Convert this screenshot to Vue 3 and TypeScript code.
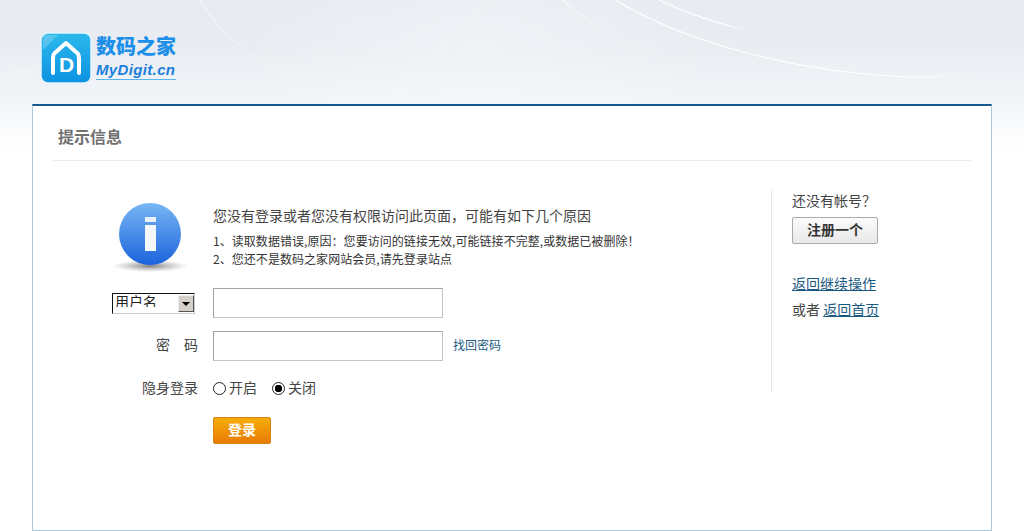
<script setup lang="ts">
const reasons: string[] = [
  '1、读取数据错误,原因：您要访问的链接无效,可能链接不完整,或数据已被删除！',
  '2、您还不是数码之家网站会员,请先登录站点',
]
</script>

<template>
  <div class="page">
    <svg class="swoosh" width="1024" height="104" viewBox="0 0 1024 104" fill="none" aria-hidden="true">
      <defs>
        <linearGradient id="fadeDown" x1="0" y1="0" x2="0" y2="1">
          <stop offset="0" stop-color="#fff" stop-opacity=".45" />
          <stop offset="1" stop-color="#fff" stop-opacity="0" />
        </linearGradient>
        <linearGradient id="fadeRight" x1="0" y1="0" x2="1" y2="0">
          <stop offset="0" stop-color="#fff" stop-opacity=".95" />
          <stop offset=".8" stop-color="#fff" stop-opacity=".95" />
          <stop offset="1" stop-color="#fff" stop-opacity="0" />
        </linearGradient>
      </defs>
      <path d="M200 0C222 38 262 72 345 92" stroke="url(#fadeDown)" stroke-width="1.5" />
      <path d="M493 0C450 30 430 75 384 104" stroke="#fff" stroke-opacity=".28" stroke-width="1.5" />
      <path d="M563 0C590 25 620 40 655 60" stroke="url(#fadeDown)" stroke-width="1.5" />
      <path d="M615 0C690 45 800 72 905 77C935 78 955 76 975 72" stroke="url(#fadeRight)" stroke-width="1.2" />
      <path d="M659 0C690 15 715 22 745 30" stroke="url(#fadeRight)" stroke-width="1.2" />
      <path d="M0 76C12 74 22 72 34 72" stroke="#fff" stroke-opacity=".18" stroke-width="4" />
    </svg>

    <header class="top">
      <a class="logo" href="#">
        <svg class="logo-mark" width="52" height="52" viewBox="0 0 52 52" aria-hidden="true">
          <defs>
            <linearGradient id="logoFill" x1="0" y1="0" x2="0" y2="1">
              <stop offset="0" stop-color="#2bb9ec" />
              <stop offset="1" stop-color="#0e92e2" />
            </linearGradient>
          </defs>
          <rect x="1" y="1" width="50" height="50" rx="7" fill="url(#logoFill)" stroke="#e4f4fb" stroke-width="1.5" />
          <path d="M3 3H18L3 18Z" fill="#fff" fill-opacity=".22" />
          <path d="M13 41V26C13 23 14 21 16 20L26 11L36 20C38 21 39 23 39 26V41" fill="none" stroke="#fff" stroke-width="4" stroke-linejoin="round" stroke-linecap="round" />
          <text x="19" y="40" class="logo-d">D</text>
        </svg>
        <span class="logo-text">
          <span class="logo-cn">数码之家</span>
          <span class="logo-en">MyDigit.cn</span>
        </span>
      </a>
    </header>

    <main class="card">
      <h1 class="card-title">提示信息</h1>
      <div class="card-body">
        <form class="login" @submit.prevent>
          <svg class="info" width="80" height="72" viewBox="0 0 80 72" aria-hidden="true">
            <defs>
              <linearGradient id="infoFill" x1="0" y1="0" x2="0" y2="1">
                <stop offset="0" stop-color="#78b6f4" />
                <stop offset="1" stop-color="#1b63dc" />
              </linearGradient>
              <radialGradient id="infoShade">
                <stop offset="0" stop-color="#555" stop-opacity=".75" />
                <stop offset="1" stop-color="#888" stop-opacity="0" />
              </radialGradient>
            </defs>
            <ellipse cx="40" cy="63" rx="38" ry="6" fill="url(#infoShade)" />
            <circle cx="40" cy="31" r="31" fill="url(#infoFill)" />
            <rect x="35" y="14" width="11" height="5" fill="#eaf1fb" />
            <rect x="35" y="22" width="11" height="26" fill="#f4f7fc" />
          </svg>
          <div class="notice">
            <p class="notice-title">您没有登录或者您没有权限访问此页面，可能有如下几个原因</p>
            <p v-for="line in reasons" :key="line" class="notice-line">{{ line }}</p>
          </div>

          <div class="select-wrap">
            <select class="account-type">
              <option>用户名</option>
              <option>Email</option>
            </select>
            <span class="select-arrow"></span>
          </div>
          <input class="text-input" type="text" />

          <label class="field-label">密　码</label>
          <div class="field-line">
            <input class="text-input" type="password" />
            <a class="forgot" href="#">找回密码</a>
          </div>

          <span class="field-label">隐身登录</span>
          <div class="radios">
            <label class="radio"><input type="radio" name="hidden" />开启</label>
            <label class="radio"><input type="radio" name="hidden" checked />关闭</label>
          </div>

          <button class="submit" type="submit">登录</button>
        </form>

        <aside class="side">
          <p class="side-q">还没有帐号？</p>
          <button class="register" type="button">注册一个</button>
          <p class="side-back"><a href="#">返回继续操作</a></p>
          <p class="side-home">或者 <a href="#">返回首页</a></p>
        </aside>
      </div>
    </main>
  </div>
</template>

<style>
html, body { margin: 0; overflow: hidden; background: #fff; }
</style>

<style scoped>
.page {
  position: relative;
  height: 531px;
  overflow: hidden;
  font-family: "Noto Sans CJK SC", "Liberation Sans", sans-serif;
  color: #444;
  background:
    radial-gradient(ellipse 240px 110px at 480px 50px, rgba(255, 255, 255, .3), rgba(255, 255, 255, 0)),
    linear-gradient(#e7ebf1 0, #e9edf2 50px, #eff2f6 80px, #f3f6f8 104px, #fafbfc 130px, #fff 150px);
}
.swoosh { position: absolute; left: 0; top: 0; }
.top { position: relative; height: 104px; padding: 32px 0 0 40px; box-sizing: border-box; }
.logo { display: flex; gap: 3px; text-decoration: none; }
.logo-mark { flex: none; }
.logo-d { font: 700 21px "Liberation Sans", sans-serif; fill: #fff; }
.logo-text { display: flex; flex-direction: column; padding: 1px 0 0 1px; }
.logo-cn { font-size: 20px; line-height: 25px; font-weight: 900; color: #1c8fe8; white-space: nowrap; }
.logo-en {
  margin-top: 2px;
  font: italic 700 15px/19px "Liberation Sans", sans-serif;
  color: #1c7fdc;
  border-bottom: 1px solid #56b4ee;
  white-space: nowrap;
  letter-spacing: .35px;
}
.card {
  position: relative;
  height: 427px;
  box-sizing: border-box;
  margin: 0 32px;
  padding: 0 20px;
  background: #fff;
  border: 1px solid #a9c9dc;
  border-top: 2px solid #15598c;
}
.card-title {
  margin: 0;
  height: 54px;
  padding-left: 5px;
  border-bottom: 1px solid #e8ebee;
  font-size: 16px;
  line-height: 60px;
  font-weight: 700;
  color: #707070;
}
.card-body { display: flex; padding-top: 29px; }
.login {
  display: grid;
  grid-template-columns: 145px 1fr;
  grid-template-rows: 72px 30px 30px 30px 27px;
  column-gap: 15px;
  row-gap: 13px;
  align-items: center;
  width: 718px;
  height: 201px;
  padding-top: 13px;
  box-sizing: border-box;
  align-content: start;
}
.info { justify-self: end; margin-right: 8px; align-self: start; }
.notice { align-self: start; }
.notice p { margin: 0; white-space: nowrap; }
.notice-title { font-size: 14px; line-height: 24px; color: #444; margin-bottom: 5px !important; }
.notice-line { font-size: 12px; line-height: 18px; color: #333; letter-spacing: .05px; }
.select-wrap { position: relative; justify-self: end; margin-right: 3px; width: 83px; height: 21px; }
.account-type {
  appearance: none;
  display: block;
  width: 83px;
  height: 21px;
  box-sizing: border-box;
  padding: 0 0 6px 2px;
  border: 1px solid;
  border-color: #111 #ccc #ccc #111;
  border-radius: 0;
  background: #fff;
  font: 14px/14px "Noto Sans CJK SC", sans-serif;
  color: #222;
}
.select-arrow {
  position: absolute;
  right: 1px;
  top: 2px;
  width: 16px;
  height: 17px;
  box-sizing: border-box;
  background: #d4d0c8;
  border: 1px solid;
  border-color: #eee #555 #555 #eee;
  pointer-events: none;
}
.select-arrow::after {
  content: "";
  position: absolute;
  left: 3px;
  top: 6px;
  border: 4px solid transparent;
  border-top: 4px solid #000;
  border-bottom: 0;
}
.text-input {
  display: block;
  width: 230px;
  height: 30px;
  box-sizing: border-box;
  border: 1px solid;
  border-color: #a2a2a2 #c4c4c4 #c4c4c4 #a2a2a2;
  border-radius: 0;
  background: #fff;
  outline: none;
}
.field-label { justify-self: end; margin-bottom: 4px; font-size: 14px; color: #444; }
.field-line { display: flex; align-items: center; gap: 10px; }
.forgot { margin-bottom: 4px; font-size: 12px; color: #1a5a82; text-decoration: none; }
.radios { display: flex; gap: 15px; margin-bottom: 4px; }
.radio { display: flex; align-items: center; gap: 3px; font-size: 14px; color: #444; }
.radio input {
  appearance: none;
  width: 13px;
  height: 13px;
  margin: 2px 0 0;
  border: 1px solid #222;
  border-radius: 50%;
  background: #fff;
}
.radio input:checked { background: radial-gradient(circle, #000 0, #000 3.5px, #fff 4px); }
.submit {
  grid-column: 2;
  width: 58px;
  height: 27px;
  padding: 0 0 4px;
  border: 1px solid #d9820f;
  border-radius: 2px;
  background: linear-gradient(#f7ad0a, #e97b04);
  color: #fff;
  font: 700 14px "Noto Sans CJK SC", sans-serif;
}
.side {
  height: 201px;
  box-sizing: border-box;
  padding: 0 0 0 20px;
  border-left: 1px dotted #d4d4d4;
  font-size: 14px;
  color: #444;
}
.side p { margin: 0; white-space: nowrap; }
.side-q { line-height: 20px; }
.register {
  display: block;
  width: 86px;
  height: 27px;
  margin-top: 7px;
  padding: 0 0 4px;
  border: 1px solid #aaa;
  border-radius: 2px;
  background: linear-gradient(#fbfbfb, #e8e8e8);
  color: #333;
  font: 700 14px "Noto Sans CJK SC", sans-serif;
}
.side-back { margin-top: 26px !important; line-height: 26px; }
.side-home { line-height: 26px; }
.side a { color: #1a5a82; text-decoration: underline; }
</style>
